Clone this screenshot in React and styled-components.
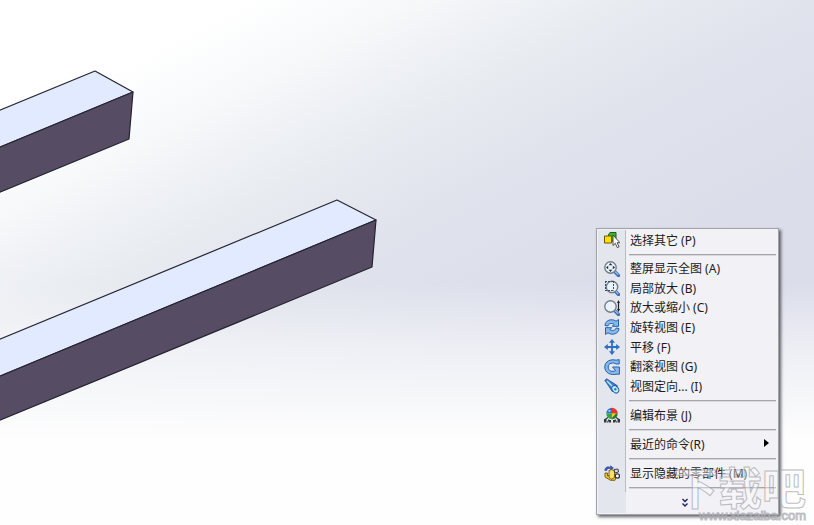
import React from "react";
import styled, { createGlobalStyle } from "styled-components";

const GlobalStyle = createGlobalStyle`
  * {
    box-sizing: border-box;
  }
  body {
    margin: 0;
    font-family: "Noto Sans", "Noto Sans CJK SC", sans-serif;
    font-size: 12px;
    color: #1c1c20;
  }
`;

// menu icons, all on a 16 x 16 grid
const Lens = ({ children, cx = 6.5, cy = 6.5 }) => (
  <>
    <path d="M10.5 10.5 14.5 14.5" stroke="#3b6cb0" strokeWidth="3.2" strokeLinecap="round" />
    <path d="M11 10.5 14.3 13.8" stroke="#9cc4ee" strokeWidth="1.2" />
    <circle cx={cx} cy={cy} r="5.7" fill="#eaf2fb" stroke="#737d8a" strokeWidth="1.4" />
    {children}
  </>
);

const icons = {
  select: (
    <>
      <path d="M4.5 2.5 6 .5h6V7l-2 2H4.5z" fill="#3fae2e" stroke="#1d5f18" />
      <path d="M.5 4h7v7h-7z" fill="#ffe100" stroke="#6a5500" />
      <path d="M9 3v10.5l2.3-2.2 2 4.3 1.8-.8-2-4.1h2.8z" fill="#fff" stroke="#3c3c3c" strokeWidth=".9" />
    </>
  ),
  fit: (
    <Lens>
      <path d="M6.5 2 8.3 4.2H4.7zM6.5 11 8.3 8.8H4.7zM2 6.5 4.2 4.7v3.6zM11 6.5 8.8 4.7v3.6z" fill="#26292f" />
    </Lens>
  ),
  area: (
    <Lens cx={8} cy={7}>
      <path d="M1 1.5h8.5M1.5 1v9.5M1 10.5h8.5M9.5 1v9.5" stroke="#3b4b63" strokeDasharray="2 1" />
    </Lens>
  ),
  zoom: (
    <Lens>
      <path d="M14.5 2v8" stroke="#222" strokeWidth="1.2" />
      <path d="M14.5 0 16 3h-3zM14.5 12 16 9h-3z" fill="#222" />
    </Lens>
  ),
  rotate: (
    <g fill="#86b8ec" stroke="#2560ad" strokeLinejoin="round">
      <path d="M1 6.5C1 1.5 7.5-1 12 2.2L14.5.6V7.3H8.3l1.8-2C7.7 3.8 4.5 4.4 4 7z" />
      <path d="M15 9.5c0 5-6.5 7.5-11 4.3l-2.5 1.6V8.7h6.2l-1.8 2c2.4 1.5 5.6.9 6.1-1.7z" />
    </g>
  ),
  pan: (
    <>
      <path d="M8 2v12M2 8h12" stroke="#2d6fc2" strokeWidth="1.8" />
      <path d="m8 0 3 3.8H5zM8 16l3-3.8H5zM0 8l3.8-3v6zM16 8l-3.8-3v6z" fill="#2d6fc2" />
    </>
  ),
  roll: (
    <path
      d="M12 1.2 15.2.6V5H12C9 3 4.2 4 4.2 8s4 5.4 7.3 3.6L8.6 8h6.8v7.2h-2.6C6.5 16.6.8 13.8.8 8S6.8-.2 12 1.2Z"
      fill="#86b8ec"
      stroke="#2560ad"
      strokeLinejoin="round"
    />
  ),
  orient: (
    <>
      <path d="M.8 2.5 2.6.8 5.4 2.6l8.1 5.2-5 6L3 5.5z" fill="#3c82cf" stroke="#1c4f92" strokeWidth=".8" />
      <path d="m3 3 8 8" stroke="#b9e2ff" strokeWidth="1.4" />
      <ellipse cx="11.3" cy="11.3" rx="3" ry="4" transform="rotate(-40 11.3 11.3)" fill="#c5ecff" stroke="#1c5ca8" />
      <circle cx="11.3" cy="11.3" r="1.2" fill="#2a7bcb" />
    </>
  ),
  scene: (
    <>
      <path d="M4 10.5 1 12.5M12 10.5l3 2M5 12.5l-1.5 3M11 12.5l1.5 3" stroke="#34383b" strokeWidth="1.2" />
      <path d="M0 12h2.5v3.5H0zM13.5 12H16v3.5h-2.5zM5 13h2v2.5H5zM9 13h2v2.5H9z" fill="#34383b" />
      <path d="M8 6.5V.8a5.7 5.7 0 0 0-5.7 5.7z" fill="#2b72d2" />
      <path d="M8 6.5V.8a5.7 5.7 0 0 1 5.7 5.7z" fill="#ec3428" />
      <path d="M8 6.5H2.3A5.7 5.7 0 0 0 8 12.2z" fill="#2da748" />
      <path d="M8 6.5h5.7A5.7 5.7 0 0 1 8 12.2z" fill="#1d7d32" />
      <path d="M8 6.5h4L8 11z" fill="#f0cb30" />
      <circle cx="5.5" cy="4" r="1.1" fill="#b9d8ff" />
    </>
  ),
  hidden: (
    <>
      <path d="M.8 5.5C1 2 4 1 6.5 2.5V.8L9.5 3 6.5 5V3.8C4.5 3 3 3.5 2.7 5.5z" fill="#3a5bc4" stroke="#20307e" strokeWidth=".5" />
      <path d="M1 8h2.5v3L7 9.5l5 2.5-1 3.3H6.5L1 12z" fill="#f3c72d" stroke="#75570a" strokeWidth=".9" />
      <path d="m5 5.5 3-1 2.5 2v6L7 14.5 5 12z" fill="#f7de68" stroke="#75570a" strokeWidth=".9" />
      <path d="m10 4.5 4-.5.5 3-3.5 1z" fill="#d7d9de" stroke="#3c3f48" />
      <circle cx="13.4" cy="11" r="2.1" fill="#fff" stroke="#32353d" strokeWidth="1.3" />
    </>
  ),
};

const menuGroups = [
  [{ icon: "select", label: "选择其它 (P)" }],
  [
    { icon: "fit", label: "整屏显示全图 (A)" },
    { icon: "area", label: "局部放大 (B)" },
    { icon: "zoom", label: "放大或缩小 (C)" },
    { icon: "rotate", label: "旋转视图 (E)" },
    { icon: "pan", label: "平移 (F)" },
    { icon: "roll", label: "翻滚视图 (G)" },
    { icon: "orient", label: "视图定向... (I)" },
  ],
  [{ icon: "scene", label: "编辑布景 (J)" }],
  [{ label: "最近的命令(R)", submenu: true }],
  [{ icon: "hidden", label: "显示隐藏的零部件 (M)" }],
];

/**
 * The two beams that run in from the left edge of the view
 */
const Beams = () => (
  <Model viewBox="0 0 380 424" role="img" aria-label="零部件">
    <g stroke="#262431" strokeWidth="1.2" strokeLinejoin="round">
      <path d="M-2 111 95 71 133 92-2 148z" fill="#e1eaff" />
      <path d="M-2 148 133 92 129 139-2 193z" fill="#564d65" />
      <path d="M-2 340 337 200 376 220-2 377z" fill="#e1eaff" />
      <path d="M-2 377 376 220 372 267-2 421z" fill="#564d65" />
    </g>
  </Model>
);

export default function App() {
  return (
    <Viewport>
      <GlobalStyle />
      <Beams />

      <ContextMenu role="menu">
        <MenuBody>
          {menuGroups.map((group, i) => (
            <React.Fragment key={i}>
              <MenuGroup $rows={group.length}>
                {group.map(({ icon, label, submenu }) => (
                  <MenuItem key={label} role="menuitem" aria-haspopup={submenu}>
                    <IconCell>
                      {icon && (
                        <Icon viewBox="0 0 16 16" aria-hidden="true">
                          {icons[icon]}
                        </Icon>
                      )}
                    </IconCell>
                    <Label>{label}</Label>
                    {submenu && <SubmenuArrow />}
                  </MenuItem>
                ))}
              </MenuGroup>
              <Separator />
            </React.Fragment>
          ))}
        </MenuBody>
        <MoreButton aria-label="展开菜单">
          <MoreIcon viewBox="0 0 6 10" aria-hidden="true">
            <path d="M0.5 1 3 3.5 5.5 1M0.5 5.5 3 8 5.5 5.5" />
          </MoreIcon>
        </MoreButton>
      </ContextMenu>

      <Watermark>
        <WatermarkName>下载吧</WatermarkName>
        <WatermarkSite>www.xiazaiba.com</WatermarkSite>
      </Watermark>
    </Viewport>
  );
}

// styled components
const Viewport = styled.main`
  position: relative;
  min-height: 100vh;
  overflow: hidden;
  background:
    linear-gradient(to bottom, rgba(255, 255, 255, 0) 54%, rgba(255, 255, 255, 0.5) 66%, #fefefe 84%),
    linear-gradient(152deg, #ffffff 14%, #f6f8fa 23%, #e8ebf0 35%, #e0e3ec 46%, #dbddea 64%);
`;

const Model = styled.svg`
  display: block;
  width: 380px;
`;

const ContextMenu = styled.div`
  position: absolute;
  top: 228px;
  right: 35px;
  width: 183px;
  padding: 1px;
  border: 1px solid #a2a3a8;
  background: #f2f1f6;
  box-shadow: 2px 2px 3px rgba(30, 32, 40, 0.7);
`;

const MenuBody = styled.div`
  display: flow-root;
  background: linear-gradient(to right, #e3e6ec 27px, #b9bcc3 27px, #b9bcc3 28px, transparent 28px);
`;

const MenuGroup = styled.div`
  display: grid;
  grid-auto-rows: 1fr;
  min-height: ${({ $rows }) => ($rows > 1 ? 137 : 20)}px;
`;

const Separator = styled.hr`
  height: 2px;
  margin: 4px 1px 3px 31px;
  border: 0;
  border-top: 1px solid #a5a6ab;
  background: #d6d6db;
`;

const MenuItem = styled.button`
  display: flex;
  align-items: center;
  padding: 0 8px 0 0;
  border: 0;
  background: transparent;
  color: inherit;
  font: inherit;
  line-height: 19px;
  text-align: left;
  white-space: nowrap;
`;

const IconCell = styled.span`
  display: flex;
  justify-content: center;
  width: 28px;
  margin-right: 4px;
`;

const Icon = styled.svg`
  width: 16px;
  height: 16px;
  fill: none;
`;

const Label = styled.span`
  flex: 1;
`;

const SubmenuArrow = styled.span`
  margin-bottom: 3px;
  border: 4px solid transparent;
  border-left: 5px solid #000;
  border-right: 0;
`;

const MoreButton = styled.button`
  display: flex;
  align-items: center;
  justify-content: center;
  width: 100%;
  height: 21px;
  padding: 0 6px 0 0;
  border: 0;
  background: linear-gradient(to right, #e3e6ec 28px, transparent 28px);
`;

const MoreIcon = styled.svg`
  width: 6px;
  height: 10px;
  fill: none;
  stroke: #1c2060;
  stroke-width: 1.4;
`;

const Watermark = styled.div`
  position: absolute;
  right: 8px;
  bottom: 2px;
  display: flex;
  flex-direction: column;
  align-items: flex-end;
  pointer-events: none;
  color: rgba(255, 255, 255, 0.4);
  -webkit-text-stroke: 1px rgba(160, 160, 166, 0.7);
`;

const WatermarkName = styled.span`
  font-family: "Noto Sans CJK SC", sans-serif;
  font-size: 44px;
  font-weight: 700;
  line-height: 46px;
`;

const WatermarkSite = styled.span`
  font-family: "Liberation Sans", sans-serif;
  font-size: 13px;
  line-height: 14px;
`;
